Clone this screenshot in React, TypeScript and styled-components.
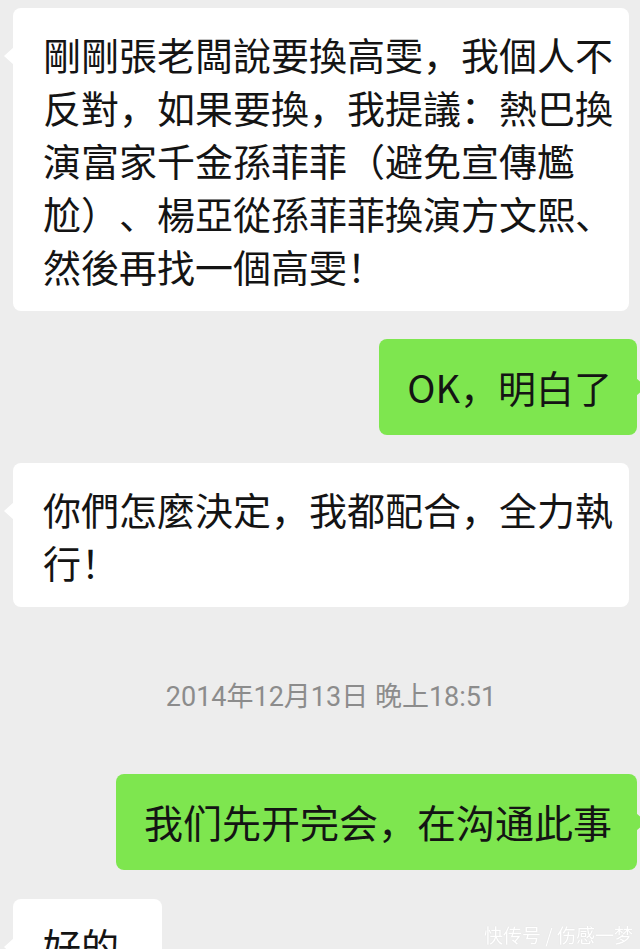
import React from 'react';
import styled, { createGlobalStyle } from 'styled-components';

/* --------------------------------- styles --------------------------------- */

const GlobalStyle = createGlobalStyle`
  html, body {
    margin: 0;
    padding: 0;
    background: #ededed;
    overflow: hidden;
  }
`;

const ChatScreen = styled.div`
  min-height: 949px;
  padding: 8px 3px 0 13px;
  display: flex;
  flex-direction: column;
  background: #ededed;
  font-family: 'Noto Sans CJK SC', 'Noto Sans', sans-serif;
  color: #141414;
  text-spacing-trim: space-all; // keep full-width punctuation like the phone does
`;

const Row = styled.div<{ $mine?: boolean; $gap: number }>`
  display: flex;
  justify-content: ${(p) => (p.$mine ? 'flex-end' : 'flex-start')};
  margin-top: ${(p) => p.$gap}px;
`;

const Bubble = styled.div<{ $mine?: boolean; $size?: number; $minWidth?: number }>`
  position: relative;
  box-sizing: border-box;
  max-width: 616px;
  min-width: ${(p) => p.$minWidth || 0}px;
  border-radius: 8px;
  background: ${(p) => (p.$mine ? '#7ee64f' : '#ffffff')};
  font-size: ${(p) => p.$size || 38}px;
  line-height: 53px;
  padding: ${(p) => (p.$mine ? '21px 25px 22px 28px' : '19px 12px 19px 30px')};
  word-break: break-all;

  /* little tail pointing at the speaker */
  &::before {
    content: '';
    position: absolute;
    top: 39px;
    ${(p) => (p.$mine ? 'right: -9px;' : 'left: -9px;')}
    border-top: 9px solid transparent;
    border-bottom: 9px solid transparent;
    ${(p) =>
      p.$mine
        ? 'border-left: 10px solid #7ee64f;'
        : 'border-right: 10px solid #ffffff;'}
  }
`;

const TimeStamp = styled.div`
  margin: 72px 0 59px;
  text-align: center;
  padding-left: 12px;
  font-family: 'Roboto', 'Noto Sans CJK SC', sans-serif;
  font-size: 27px;
  line-height: 36px;
  color: #8c8c8c;
`;

const Watermark = styled.div`
  position: fixed;
  right: 7px;
  bottom: 4px;
  font-family: 'Noto Sans CJK SC', sans-serif;
  font-size: 19px;
  line-height: 20px;
  color: #ffffff;
  text-shadow: 0 0 1px rgba(0, 0, 0, 0.12);
`;

/* -------------------------------- component ------------------------------- */

const App = (): JSX.Element => {
  return (
    <>
      <GlobalStyle />
      <ChatScreen>
        <Row $gap={0}>
          <Bubble>
            剛剛張老闆說要換高雯，我個人不反對，如果要換，我提議：熱巴換演富家千金孫菲菲（避免宣傳尷尬）、楊亞從孫菲菲換演方文熙、然後再找一個高雯！
          </Bubble>
        </Row>
        <Row $mine $gap={28}>
          <Bubble $mine>OK，明白了</Bubble>
        </Row>
        <Row $gap={28}>
          <Bubble>你們怎麼決定，我都配合，全力執行！</Bubble>
        </Row>
        <TimeStamp>2014年12月13日 晚上18:51</TimeStamp>
        <Row $mine $gap={0}>
          <Bubble $mine $size={39}>
            我们先开完会，在沟通此事
          </Bubble>
        </Row>
        <Row $gap={29}>
          <Bubble $minWidth={149}>好的</Bubble>
        </Row>
      </ChatScreen>
      <Watermark>快传号 / 伤感一梦</Watermark>
    </>
  );
};

export default App;
